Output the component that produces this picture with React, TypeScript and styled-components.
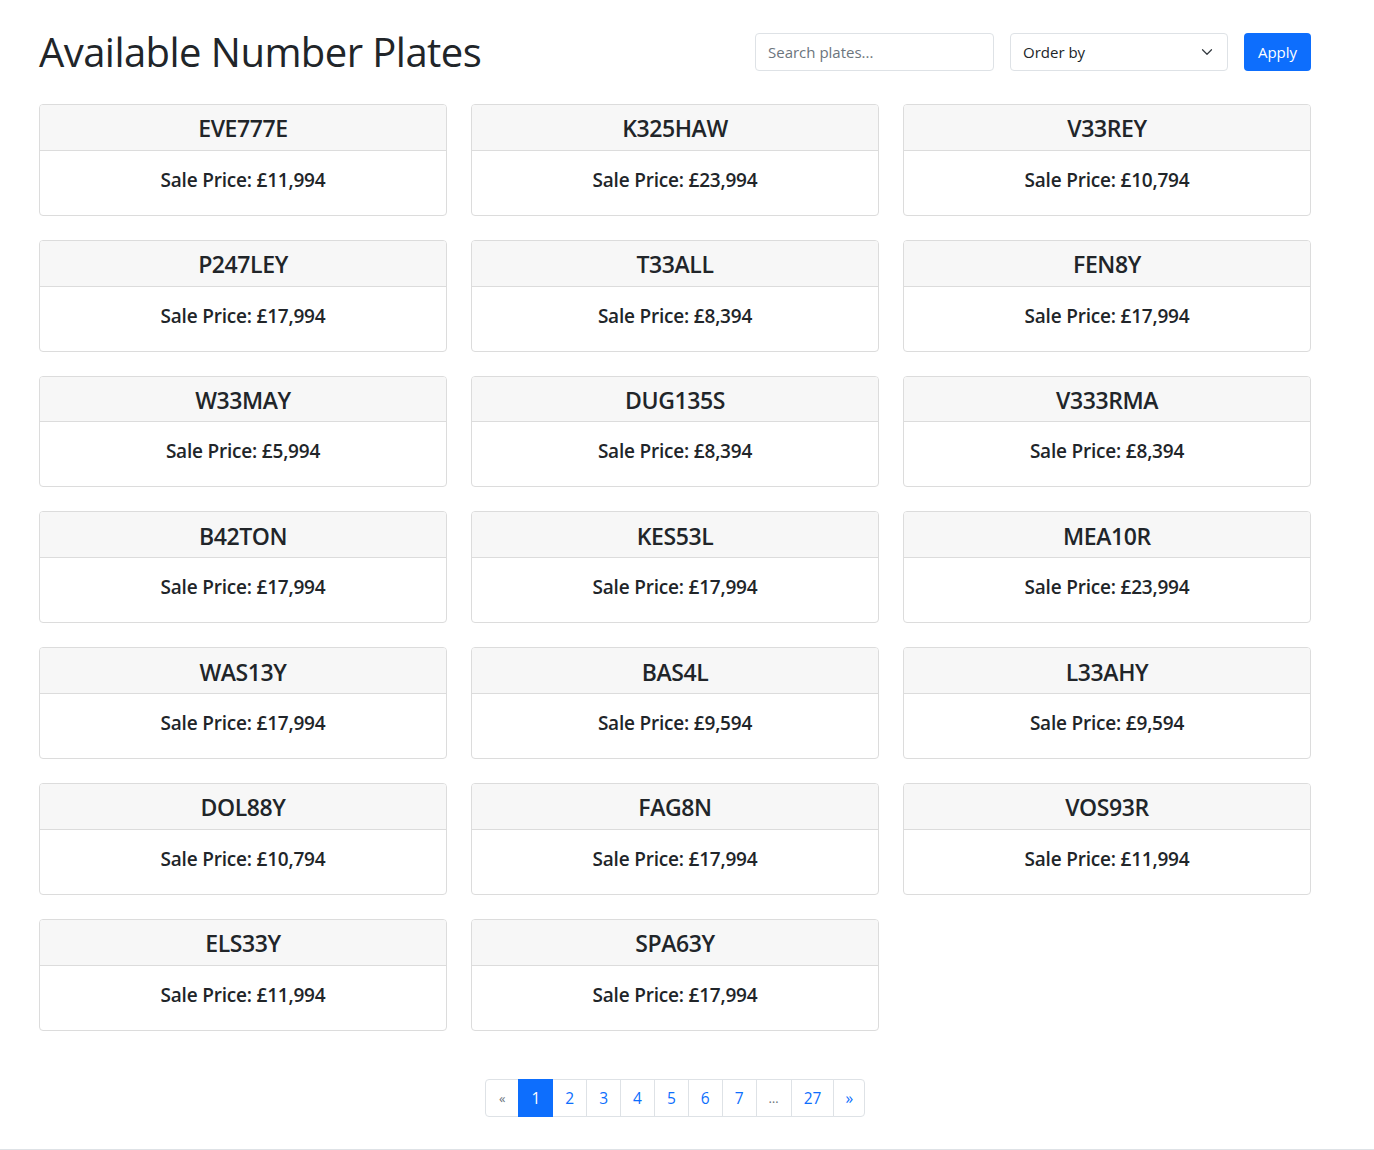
import React from 'react';
import styled, { createGlobalStyle } from 'styled-components';

const COLORS = {
  TEXT: '#212529',
  MUTED: '#6c757d',
  BLUE: '#0d6efd',
  BORDER: '#dee2e6',
  CARD_BORDER: '#dcdcdc',
  CARD_HEADER: '#f7f7f7',
  WHITE: '#ffffff',
};

const FONT = '"Open Sans", "Noto Sans", Arial, sans-serif';

interface Plate {
  reg: string;
  price: string;
}

const PLATES: Plate[] = [
  { reg: 'EVE777E', price: '£11,994' },
  { reg: 'K325HAW', price: '£23,994' },
  { reg: 'V33REY', price: '£10,794' },
  { reg: 'P247LEY', price: '£17,994' },
  { reg: 'T33ALL', price: '£8,394' },
  { reg: 'FEN8Y', price: '£17,994' },
  { reg: 'W33MAY', price: '£5,994' },
  { reg: 'DUG135S', price: '£8,394' },
  { reg: 'V333RMA', price: '£8,394' },
  { reg: 'B42TON', price: '£17,994' },
  { reg: 'KES53L', price: '£17,994' },
  { reg: 'MEA10R', price: '£23,994' },
  { reg: 'WAS13Y', price: '£17,994' },
  { reg: 'BAS4L', price: '£9,594' },
  { reg: 'L33AHY', price: '£9,594' },
  { reg: 'DOL88Y', price: '£10,794' },
  { reg: 'FAG8N', price: '£17,994' },
  { reg: 'VOS93R', price: '£11,994' },
  { reg: 'ELS33Y', price: '£11,994' },
  { reg: 'SPA63Y', price: '£17,994' },
];

type PageItem = { label: string; state?: 'active' | 'disabled' };

const PAGES: PageItem[] = [
  { label: '«', state: 'disabled' },
  { label: '1', state: 'active' },
  { label: '2' },
  { label: '3' },
  { label: '4' },
  { label: '5' },
  { label: '6' },
  { label: '7' },
  { label: '…', state: 'disabled' },
  { label: '27' },
  { label: '»' },
];

const GlobalStyle = createGlobalStyle`
  html, body {
    margin: 0;
    padding: 0;
    background: ${COLORS.WHITE};
    color: ${COLORS.TEXT};
    font-family: ${FONT};
  }
  * {
    box-sizing: border-box;
  }
`;

const ChevronDown = () => (
  <svg width="16" height="12" viewBox="0 0 16 16" fill="none">
    <path
      d="M2 5l6 6 6-6"
      stroke="#343a40"
      strokeWidth="1.6"
      strokeLinecap="round"
      strokeLinejoin="round"
    />
  </svg>
);

const PlateCard = ({ reg, price }: Plate) => (
  <Card>
    <CardHeader>{reg}</CardHeader>
    <CardBody>Sale Price: {price}</CardBody>
  </Card>
);

const App = () => {
  return (
    <>
      <GlobalStyle />
      <Page>
        <Header>
          <Title>Available Number Plates</Title>
          <Controls>
            <SearchInput placeholder="Search plates..." />
            <OrderSelect>
              <span>Order by</span>
              <ChevronDown />
            </OrderSelect>
            <ApplyButton>Apply</ApplyButton>
          </Controls>
        </Header>

        <Grid>
          {PLATES.map((plate) => (
            <PlateCard key={plate.reg} reg={plate.reg} price={plate.price} />
          ))}
        </Grid>

        <Pagination>
          {PAGES.map((item, i) => (
            <PageLink key={i} $state={item.state}>
              {item.label}
            </PageLink>
          ))}
        </Pagination>
      </Page>
      <Footer />
    </>
  );
};

const Page = styled.main`
  width: 1272px;
  margin-left: 39px;
  padding-top: 28px;
`;

const Header = styled.header`
  display: flex;
  align-items: center;
  justify-content: space-between;
  height: 48px;
  margin-bottom: 28px;
`;

const Title = styled.h1`
  margin: 0;
  font-size: 40px;
  font-weight: 500;
  line-height: 48px;
  letter-spacing: -0.55px;
`;

const Controls = styled.div`
  display: flex;
  align-items: center;
  gap: 16px;
`;

const fieldBase = `
  height: 38px;
  border: 1px solid ${COLORS.BORDER};
  border-radius: 4px;
  background: ${COLORS.WHITE};
  font-family: ${FONT};
  font-size: 15px;
  color: ${COLORS.TEXT};
  padding: 0 12px;
`;

const SearchInput = styled.input`
  ${fieldBase}
  width: 239px;
  outline: none;

  &::placeholder {
    color: ${COLORS.MUTED};
  }
`;

const OrderSelect = styled.div`
  ${fieldBase}
  width: 218px;
  display: flex;
  align-items: center;
  justify-content: space-between;
  cursor: pointer;
`;

const ApplyButton = styled.button`
  height: 38px;
  width: 67px;
  border: none;
  border-radius: 4px;
  background: ${COLORS.BLUE};
  color: ${COLORS.WHITE};
  font-family: ${FONT};
  font-size: 15px;
  cursor: pointer;
`;

const Grid = styled.section`
  display: grid;
  grid-template-columns: repeat(3, 1fr);
  column-gap: 24px;
  row-gap: 24px;
`;

const Card = styled.article`
  border: 1px solid ${COLORS.CARD_BORDER};
  border-radius: 4px;
  overflow: hidden;
  background: ${COLORS.WHITE};
`;

const CardHeader = styled.h4`
  margin: 0;
  height: 45.8px;
  padding-top: 2px;
  display: flex;
  align-items: center;
  justify-content: center;
  background: ${COLORS.CARD_HEADER};
  border-bottom: 1px solid ${COLORS.CARD_BORDER};
  font-size: 23px;
  font-weight: 600;
  letter-spacing: -0.4px;
`;

const CardBody = styled.h5`
  margin: 0;
  height: 64px;
  padding-top: 17px;
  text-align: center;
  font-size: 19px;
  font-weight: 600;
  line-height: 24px;
  letter-spacing: -0.2px;
`;

const Pagination = styled.nav`
  display: flex;
  justify-content: center;
  margin-top: 48px;
  padding-bottom: 32px;
`;

const PageLink = styled.a<{ $state?: 'active' | 'disabled' }>`
  display: flex;
  align-items: center;
  justify-content: center;
  height: 38px;
  padding: 0 12px;
  margin-left: -1px;
  font-size: ${({ $state }) => ($state === 'disabled' ? '13px' : '15.5px')};
  border: 1px solid ${({ $state }) => ($state === 'active' ? COLORS.BLUE : COLORS.BORDER)};
  background: ${({ $state }) => ($state === 'active' ? COLORS.BLUE : COLORS.WHITE)};
  color: ${({ $state }) =>
    $state === 'active' ? COLORS.WHITE : $state === 'disabled' ? COLORS.MUTED : COLORS.BLUE};
  cursor: pointer;
  position: relative;
  z-index: ${({ $state }) => ($state === 'active' ? 1 : 0)};

  &:first-child {
    margin-left: 0;
    padding: 0 13px;
    border-radius: 4px 0 0 4px;
  }

  &:last-child {
    padding: 0 11px;
    border-radius: 0 4px 4px 0;
  }
`;

const Footer = styled.footer`
  border-top: 1px solid ${COLORS.BORDER};
  height: 60px;
`;

export default App;
